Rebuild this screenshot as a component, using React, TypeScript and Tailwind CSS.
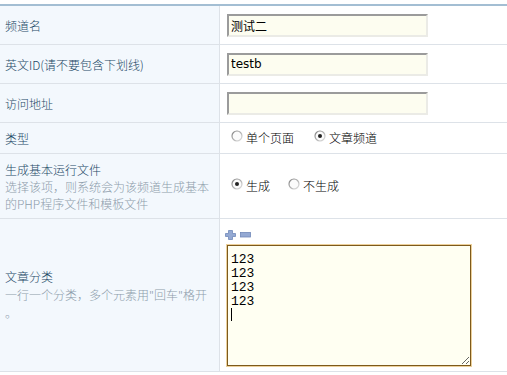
import React from "react";

const FONT = { fontFamily: '"Noto Sans CJK SC", "Liberation Sans", sans-serif' };

function Radio({ checked }: { checked?: boolean }) {
  return (
    <svg width="12" height="12" viewBox="0 0 12 12" className="shrink-0 -mt-[4px]">
      <defs>
        <linearGradient id={checked ? "rg1" : "rg0"} x1="0" y1="0" x2="1" y2="1">
          <stop offset="0" stopColor="#7f7f7f" />
          <stop offset="1" stopColor="#e2e2e2" />
        </linearGradient>
      </defs>
      <circle cx="6" cy="6" r="5" fill="#fbfbfb" stroke={`url(#${checked ? "rg1" : "rg0"})`} strokeWidth="1.2" />
      {checked && <circle cx="6" cy="6" r="2" fill="#222" />}
    </svg>
  );
}

function Row({
  h,
  left,
  children,
  rightClass = "items-center",
}: {
  h: string;
  left: React.ReactNode;
  children: React.ReactNode;
  rightClass?: string;
}) {
  return (
    <div className={`flex border-b border-[#dde2e8] ${h}`}>
      <div className="w-[220px] shrink-0 border-r border-[#dde2e8] bg-[#f3f8fd] pl-[5px] flex flex-col justify-center text-[12px] leading-[17px] text-[#1c4866] font-light">
        {left}
      </div>
      <div className={`flex-1 pl-[7px] flex ${rightClass}`}>{children}</div>
    </div>
  );
}

function TextInput({ value }: { value: string }) {
  return (
    <input
      readOnly
      value={value}
      className="w-[201px] h-[23px] bg-[#fdfdf0] border-2 border-t-[#9b9b9b] border-l-[#9b9b9b] border-r-[#ebebe6] border-b-[#ebebe6] px-[2px] text-[12px] text-black outline-none"
      style={{ fontFamily: '"DejaVu Sans", "Noto Sans CJK SC", sans-serif' }}
    />
  );
}

export default function App() {
  return (
    <div className="w-[507px] h-[375px] bg-white overflow-hidden" style={FONT}>
      <div className="h-1" />
      <div className="border-t-2 border-[#a3bed3]">
        <Row h="h-[39px]" left={<span>频道名</span>}>
          <TextInput value="测试二" />
        </Row>
        <Row h="h-[39px]" left={<span>英文ID(请不要包含下划线)</span>}>
          <TextInput value="testb" />
        </Row>
        <Row h="h-[39px]" left={<span>访问地址</span>}>
          <TextInput value="" />
        </Row>
        <Row h="h-[31px]" left={<span>类型</span>}>
          <div className="flex items-center text-[12px] text-black pl-[4px] font-light">
            <Radio />
            <span className="ml-[3px]">单个页面</span>
            <span className="ml-[20px]" />
            <Radio checked />
            <span className="ml-[3px]">文章频道</span>
          </div>
        </Row>
        <Row
          h="h-[65px]"
          left={
            <>
              <span>生成基本运行文件</span>
              <span className="text-[#8d9cab]">
                选择该项，则系统会为该频道生成基本
                <br />
                的PHP程序文件和模板文件
              </span>
            </>
          }
        >
          <div className="flex items-center text-[12px] text-black pl-[4px] font-light">
            <Radio checked />
            <span className="ml-[3px]">生成</span>
            <span className="ml-[18px]" />
            <Radio />
            <span className="ml-[3px]">不生成</span>
          </div>
        </Row>
        <Row
          h="h-[153px]"
          rightClass="flex-col items-start pt-[11px]"
          left={
            <div className="leading-[18px]">
              <div>文章分类</div>
              <div className="text-[#8d9cab]">
                一行一个分类，多个元素用"回车"格开
                <br />。
              </div>
            </div>
          }
        >
          <div className="flex items-center gap-[4px] -ml-[2px]">
            <svg width="11" height="10" viewBox="0 0 11 10">
              <path
                d="M3.5 0.5h4v3h3v3h-3v3h-4v-3h-3v-3h3z"
                fill="#94a9d3"
                stroke="#7088b8"
                strokeWidth="0.8"
              />
            </svg>
            <svg width="11" height="6" viewBox="0 0 11 6">
              <rect x="0.5" y="0.5" width="10" height="4.5" fill="#94a9d3" stroke="#7088b8" strokeWidth="0.8" />
            </svg>
          </div>
          <div className="relative mt-[5px]">
            <textarea
              readOnly
              value={"123\n123\n123\n123\n"}
              className="block w-[244px] h-[121px] bg-[#fffff2] border border-[#7d5a1c] shadow-[0_0_0_1px_#ecd09a] px-[3px] pt-[7px] text-[13px] leading-[14px] text-black outline-none"
              style={{ fontFamily: '"Liberation Mono", monospace' }}
            />
            <div className="absolute left-[4px] top-[63px] w-px h-[13px] bg-black" />
          </div>
        </Row>
      </div>
    </div>
  );
}
